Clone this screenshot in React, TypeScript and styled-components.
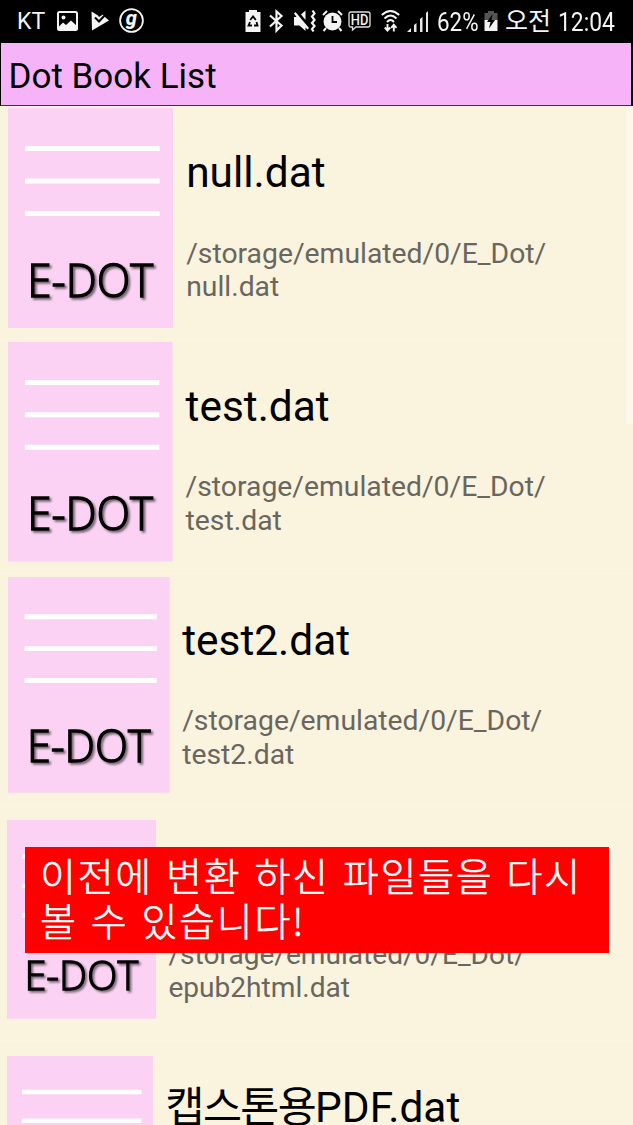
import React from "react";
import styled, { createGlobalStyle } from "styled-components";

const GlobalStyle = createGlobalStyle`
  * { box-sizing: border-box; }
  html, body { margin: 0; padding: 0; background: #faf3de; overflow: hidden; }
`;

const Screen = styled.main`
  position: relative;
  width: 633px;
  height: 1125px;
  overflow: hidden;
  display: flex;
  flex-direction: column;
  background: #faf3de;
  color: #000;
  font-family: Roboto, "Noto Sans CJK KR", sans-serif;
`;

const StatusBar = styled.header`
  flex: none;
  display: flex;
  align-items: flex-start;
  height: 42px;
  background: #000;
  color: #f4f4f4;
`;

const StatusIcon = styled.svg<{ $left: number; $top: number }>`
  flex: none;
  display: block;
  overflow: visible;
  margin: ${(p) => p.$top}px 0 0 ${(p) => p.$left}px;
`;

const StatusText = styled.span<{ $left: number; $width: number; $size: number; $scale?: number; $top?: number }>`
  flex: none;
  width: ${(p) => p.$width}px;
  margin-left: ${(p) => p.$left}px;
  margin-top: ${(p) => p.$top ?? 0}px;
  font-size: ${(p) => p.$size}px;
  line-height: 42px;
  white-space: nowrap;
  transform: scaleX(${(p) => p.$scale ?? 1});
  transform-origin: 0 50%;
`;

const TitleBar = styled.div`
  flex: none;
  height: 64px;
  border: 1px solid #000;
  border-right-width: 2px;
  border-bottom-color: #3c3638;
  background: #f7b3f7;
  padding-left: 7.5px;
  font-size: 35px;
  line-height: 67px;
  white-space: nowrap;
`;

const List = styled.ul`
  list-style: none;
  margin: 0;
  padding: 0;
  display: flex;
  flex-direction: column;
`;

const Row = styled.li`
  flex: none;
  height: 233.8px;
  display: flex;
  border-bottom: 1px solid #fbf5e3;
`;

const Cover = styled.svg<{ $top: number; $left: number }>`
  flex: none;
  display: block;
  margin: ${(p) => p.$top}px 0 0 ${(p) => p.$left}px;
`;

const Details = styled.div<{ $gap: number }>`
  display: flex;
  flex-direction: column;
  padding: 42px 0 0 ${(p) => p.$gap}px;
`;

const FileName = styled.h2`
  margin: 0;
  height: 50px;
  font-size: 42.4px;
  font-weight: 400;
  line-height: 50px;
  white-space: nowrap;
`;

const Hangul = styled.span`
  letter-spacing: -1.6px;
`;

const FilePath = styled.p<{ $size: number }>`
  margin: 38.5px 0 0;
  color: #69665f;
  font-size: ${(p) => p.$size}px;
  line-height: 33.5px;
  white-space: nowrap;
`;

const ScrollThumb = styled.div`
  position: absolute;
  top: 107px;
  right: 0;
  width: 7px;
  height: 317px;
  background: #fdf8ea;
`;

const Notice = styled.div`
  position: absolute;
  left: 25px;
  top: 847px;
  width: 584px;
  height: 106px;
  padding: 5px 0 0 15px;
  background: #ff0000;
  color: #fff;
  font-family: "Noto Sans CJK KR", sans-serif;
  font-weight: 300;
  -webkit-text-stroke: 0.6px #fff;
  font-size: 39px;
  line-height: 45px;
  letter-spacing: 1.8px;
  word-spacing: 2.6px;
  white-space: nowrap;
`;

const BookCover = ({ width, top, left }: { width: number; top: number; left: number }) => (
  <Cover $top={top} $left={left} width={width} height={(width * 4) / 3} viewBox="0 0 165 220">
    <defs>
      <filter id="shade" x="-10%" y="-20%" width="125%" height="150%">
        <feDropShadow dx="2" dy="2" stdDeviation="1.3" floodColor="#000" floodOpacity="0.55" />
      </filter>
    </defs>
    <rect width="165" height="220" fill="#fbd2f3" />
    <path d="M17 40.5H151.700M17 73H151.700M17 105.500H151.700" stroke="#fff" strokeWidth="5" />
    <text
      x="19.300"
      y="188.500"
      fontFamily="'Open Sans', 'Noto Sans', sans-serif"
      fontSize="45.500"
      fontWeight="300"
      stroke="#000"
      strokeWidth="1.400"
      textLength="126"
      lengthAdjust="spacingAndGlyphs"
      filter="url(#shade)"
    >
      E-DOT
    </text>
  </Cover>
);

interface Book {
  hangul?: string;
  name: string;
  pathSize?: number;
  width: number;
  top: number;
  left: number;
  gap: number;
}

const books: Book[] = [
  { name: "null.dat", pathSize: 28.3, width: 165, top: 2, left: 8, gap: 13.2 },
  { name: "test.dat", pathSize: 28.3, width: 164.6, top: 2.5, left: 8, gap: 13 },
  { name: "test2.dat", pathSize: 28.3, width: 161.8, top: 3.8, left: 7.8, gap: 12.6 },
  { name: "epub2html.dat", pathSize: 28.1, width: 149, top: 13, left: 7.2, gap: 12.2 },
  { hangul: "캡스톤용", name: "PDF.dat", width: 146.3, top: 15, left: 7.2, gap: 12 },
];

export default function App() {
  return (
    <Screen>
      <GlobalStyle />
      <StatusBar>
        <StatusText $left={17} $width={28} $size={23} $top={1}>KT</StatusText>
        <StatusIcon $left={12} $top={11} width="21" height="20" viewBox="0 0 21 20">
          <rect x="1" y="1" width="19" height="18" rx="1.500" fill="none" stroke="#f4f4f4" strokeWidth="2" />
          <circle cx="6.500" cy="6.500" r="2" fill="#f4f4f4" />
          <path d="M1 16.500L6 11.500L9 14L14 9.500L20 15V19H1Z" fill="#f4f4f4" />
        </StatusIcon>
        <StatusIcon $left={13} $top={11} width="18" height="20" viewBox="0 0 18 20">
          <path d="M0.500 0.500L7 4.500L8 6L12 3.500L14.500 6.500L18 9.500L1 19.500Z" fill="#f4f4f4" />
          <path d="M4 6.500L8 10.500L14.500 3.500" fill="none" stroke="#000" strokeWidth="2" />
        </StatusIcon>
        <StatusIcon $left={9.5} $top={8} width="25" height="25" viewBox="0 0 25 25">
          <circle cx="12.500" cy="12.500" r="11.400" fill="none" stroke="#f4f4f4" strokeWidth="1.800" />
          <text x="6.800" y="16.800" fontFamily="Roboto, sans-serif" fontSize="20" fontStyle="italic" fontWeight="800" fill="#f4f4f4">g</text>
        </StatusIcon>
        <StatusIcon $left={101} $top={10} width="16" height="22" viewBox="0 0 16 22">
          <path d="M4 0H12V2H15.500V22H0.500V2H4Z" fill="#f4f4f4" />
          <path d="M5.200 10L8 6.500L10.800 10M11.500 12L12.500 15.500H9M7 15.500H3.500L5 12" fill="none" stroke="#000" strokeWidth="1.800" />
        </StatusIcon>
        <StatusIcon $left={8.5} $top={10} width="14" height="22" viewBox="0 0 14 22">
          <path d="M1 5.500L12.500 15.500L7.500 20.500V1.500L12.500 6L1 16.500" fill="none" stroke="#f4f4f4" strokeWidth="2.200" />
        </StatusIcon>
        <StatusIcon $left={9.5} $top={10} width="24" height="22" viewBox="0 0 24 22">
          <path d="M1 7H3.500L1 3.500L2.500 2L16 18L14.500 19.500L12.500 17.500V21L6.500 15.500H1Z" fill="#f4f4f4" />
          <path d="M12.500 0.500V10L8 4.500Z" fill="#f4f4f4" />
          <path d="M19.500 0.500L21.500 3.500L19 6.500L21.500 10L19 13L21.500 16L19 19L20.500 21.500" fill="none" stroke="#f4f4f4" strokeWidth="2.200" />
        </StatusIcon>
        <StatusIcon $left={5.5} $top={10} width="21" height="22" viewBox="0 0 21 22">
          <circle cx="10.500" cy="11.500" r="9" fill="#f4f4f4" />
          <path d="M1 5L5 1M16 1L20 5M4 18L1.500 21M17 18L19.500 21" stroke="#f4f4f4" strokeWidth="2" />
          <path d="M10.500 6V12H15" fill="none" stroke="#000" strokeWidth="1.800" />
        </StatusIcon>
        <StatusIcon $left={5} $top={11} width="23" height="20" viewBox="0 0 23 20">
          <path d="M3 1H20Q22 1 22 3V14Q22 16 20 16H8L4.500 19V16H3Q1 16 1 14V3Q1 1 3 1Z" fill="none" stroke="#e0e0e0" strokeWidth="1.300" />
          <text x="2.800" y="13.500" fontFamily="Roboto, sans-serif" fontSize="14" fontWeight="500" fill="#f4f4f4" textLength="17.500" lengthAdjust="spacingAndGlyphs">HD</text>
        </StatusIcon>
        <StatusIcon $left={10} $top={10} width="19" height="22" viewBox="0 0 19 22">
          <path d="M0.800 5Q9.500 -3 18.200 5M3.500 8.500Q9.500 2.500 15.500 8.500M6 12Q9.500 8 13 12" fill="none" stroke="#f4f4f4" strokeWidth="2" />
          <path d="M6.500 14V20M3.800 17.500L6.500 20.500L9.200 17.500M12.800 21.500V15M10.200 17.800L12.800 14.800L15.500 17.800" fill="none" stroke="#f4f4f4" strokeWidth="1.900" />
        </StatusIcon>
        <StatusIcon $left={7} $top={11} width="22" height="21" viewBox="0 0 22 21">
          <path d="M0 21L4 17V21ZM7 14L9.500 12V21H7ZM13 8L15.500 6V21H13ZM19 2L21 0V21H19Z" fill="#e8e8e8" />
        </StatusIcon>
        <StatusText $left={7.5} $width={41} $size={26} $scale={0.86} $top={1}>62%</StatusText>
        <StatusIcon $left={6} $top={11} width="14" height="20" viewBox="0 0 14 20">
          <path d="M4 0H10V2H13.500V9H0.500V2H4Z" fill="#555" />
          <path d="M0.500 9H13.500V20H0.500Z" fill="#f4f4f4" />
          <path d="M8.500 3L3 11H6.500L5 17.500L11 9H7.500Z" fill="#000" />
        </StatusIcon>
        <StatusText $left={7.5} $width={46} $size={25} $top={1}>오전</StatusText>
        <StatusText $left={6.5} $width={57} $size={26} $scale={0.88} $top={1}>12:04</StatusText>
      </StatusBar>
      <TitleBar>Dot Book List</TitleBar>
      <List>
        {books.map((book) => (
          <Row key={book.name}>
            <BookCover width={book.width} top={book.top} left={book.left} />
            <Details $gap={book.gap}>
              <FileName>
                {book.hangul && <Hangul>{book.hangul}</Hangul>}
                {book.name}
              </FileName>
              {book.pathSize && (
                <FilePath $size={book.pathSize}>
                  /storage/emulated/0/E_Dot/
                  <br />
                  {book.name}
                </FilePath>
              )}
            </Details>
          </Row>
        ))}
      </List>
      <ScrollThumb />
      <Notice>
        이전에 변환 하신 파일들을 다시
        <br />볼 수 있습니다!
      </Notice>
    </Screen>
  );
}
